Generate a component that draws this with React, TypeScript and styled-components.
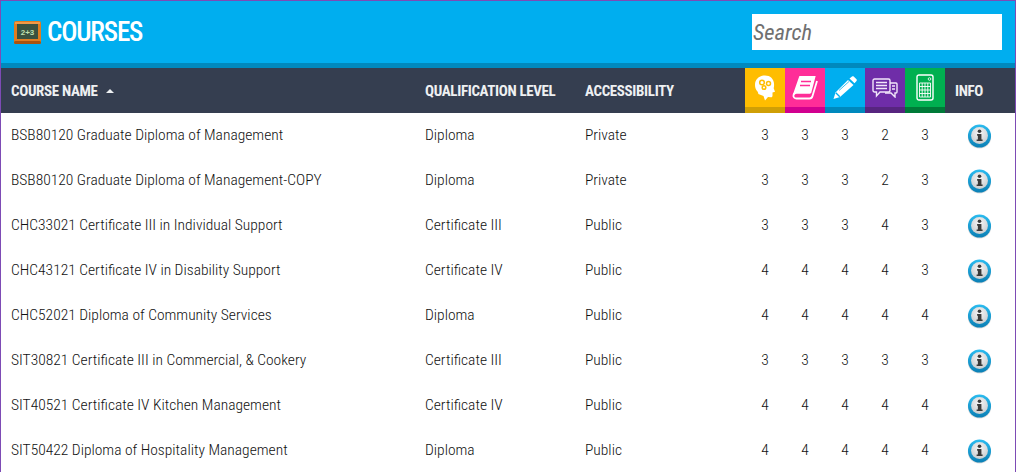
import React from "react";
import styled, { createGlobalStyle } from "styled-components";

const courses = [
	{ name: "BSB80120 Graduate Diploma of Management", level: "Diploma", access: "Private", scores: [3, 3, 3, 2, 3] },
	{ name: "BSB80120 Graduate Diploma of Management-COPY", level: "Diploma", access: "Private", scores: [3, 3, 3, 2, 3] },
	{ name: "CHC33021 Certificate III in Individual Support", level: "Certificate III", access: "Public", scores: [3, 3, 3, 4, 3] },
	{ name: "CHC43121 Certificate IV in Disability Support", level: "Certificate IV", access: "Public", scores: [4, 4, 4, 4, 3] },
	{ name: "CHC52021 Diploma of Community Services", level: "Diploma", access: "Public", scores: [4, 4, 4, 4, 4] },
	{ name: "SIT30821 Certificate III in Commercial, & Cookery", level: "Certificate III", access: "Public", scores: [3, 3, 3, 3, 3] },
	{ name: "SIT40521 Certificate IV Kitchen Management", level: "Certificate IV", access: "Public", scores: [4, 4, 4, 4, 4] },
	{ name: "SIT50422 Diploma of Hospitality Management", level: "Diploma", access: "Public", scores: [4, 4, 4, 4, 4] },
];

const GlobalStyle = createGlobalStyle`
  html, body {
    margin: 0;
    height: 472px;
    overflow: hidden;
    background: #fff;
  }
`;

const Frame = styled.div`
  width: 1016px;
  height: 472px;
  box-sizing: border-box;
  border: 1px solid #7d4bb5;
  border-bottom: 0;
  overflow: hidden;
  font-family: "Roboto", sans-serif;
  font-stretch: 75%;
`;

const TopBar = styled.header`
  height: 62px;
  background: #00aeef;
  border-bottom: 5px solid #0089bd;
  display: flex;
  align-items: center;
  justify-content: space-between;
  padding: 0 13px;
`;

const Brand = styled.div`
  display: flex;
  align-items: center;
  gap: 5px;
`;

const Title = styled.h1`
  margin: 0;
  color: #fff;
  font-size: 27px;
  font-weight: 500;
  letter-spacing: -1.2px;
`;

const SearchBox = styled.input`
  width: 250px;
  height: 36px;
  box-sizing: border-box;
  border: 0;
  padding: 0 1px;
  background: #fff;
  font-family: inherit;
  font-stretch: inherit;
  font-size: 22.5px;
  font-style: italic;
  &::placeholder {
    color: #707070;
    opacity: 1;
  }
`;

const columns = "414px 160px 170px repeat(5, 40px) 70px";

const HeadRow = styled.div`
  display: grid;
  grid-template-columns: ${columns};
  height: 45px;
  background: #353e50;
  color: #eef0f2;
  font-size: 15px;
  font-weight: 700;
  letter-spacing: -0.35px;
  white-space: nowrap;
`;

const HeadCell = styled.div`
  display: flex;
  align-items: center;
  padding-left: 10px;
  gap: 8px;
`;

const IconCell = styled.div<{ $bg: string; $edge: string }>`
  display: flex;
  align-items: center;
  justify-content: center;
  box-sizing: border-box;
  background: ${(p) => p.$bg};
  border-bottom: 6px solid ${(p) => p.$edge};
`;

const SortArrow = styled.span`
  width: 0;
  height: 0;
  border-left: 4px solid transparent;
  border-right: 4px solid transparent;
  border-bottom: 4px solid #eef0f2;
`;

const Row = styled.div`
  display: grid;
  grid-template-columns: ${columns};
  height: 45px;
  align-items: center;
  background: #fff;
  color: #111;
  font-size: 15.5px;
  font-weight: 320;
`;

const Cell = styled.div`
  padding-left: 10px;
  padding-bottom: 1px;
`;

const Score = styled.div`
  text-align: center;
  padding-bottom: 1px;
`;

const InfoCell = styled.div`
  display: flex;
  justify-content: center;
  padding-right: 2px;
  padding-top: 2px;
`;

const Board = () => (
	<svg width="28" height="25" viewBox="0 0 28 25">
		<rect x="0" y="1" width="27" height="23" rx="2" fill="#e07c20" />
		<rect x="0" y="21" width="27" height="3" rx="1.500" fill="#a8530f" />
		<rect x="1" y="2" width="25" height="2" fill="#f09a48" />
		<rect x="3" y="4" width="21" height="15" fill="#3a5240" />
		<text x="13.500" y="14.500" textAnchor="middle" fontSize="8" fontWeight="700" fill="#bfe0b0" fontFamily="Liberation Sans">
			2+3
		</text>
	</svg>
);

const HeadIcon = () => (
	<svg width="22" height="26" viewBox="0 0 22 26">
		<path
			d="M11 .5C5 .5 1 4.500 1 10c0 3 1 5 2.500 6.500.6 1 .8 1.500.8 2.500L9.500 21l1.500 4.500 3-3.500 3 .3c1 0 1.500-.8 1.500-1.800v-3l2.500-.8-1.300-3.500C21.500 5 17 .5 11 .5z"
			fill="#fff"
		/>
		<g fill="none" stroke="#ffbd00" strokeWidth="1.500">
			<circle cx="8" cy="7.500" r="2.300" />
			<circle cx="14.500" cy="8.500" r="2" />
			<circle cx="10" cy="12.500" r="1.800" />
		</g>
	</svg>
);

const BookIcon = () => (
	<svg width="26" height="24" viewBox="0 0 26 24" fill="none" stroke="#fff" strokeWidth="1.800">
		<path d="M8 1h14.500l-4 15H4.500C3 16 2 17 2 18z" fill="#fff" />
		<path d="M25 5l-4.500 15c-.4 1.500-1.300 2.500-3 2.500H4.500C2.500 22.500 1 21 1.500 19c.4-1.500 1.800-2.200 3-2.200h14" />
		<path d="M9 5.500h10M8 9.500h10" stroke="#ff2d98" strokeWidth="1.700" />
	</svg>
);

const PencilIcon = () => (
	<svg width="24" height="23" viewBox="0 0 24 23">
		<path d="M16.500 2.500L19 .5c.6-.4 1.200-.4 1.700 0l2.800 2.800c.5.5.4 1.200 0 1.700l-2 2.300z" fill="#fff" />
		<path d="M15 4l5.500 5L7 21 .5 23l2-6.500z" fill="#fff" />
		<path d="M2.800 16.800l4 4" stroke="#00aeef" strokeWidth="1.300" />
		<path d="M6 14.500L16 5.500" stroke="#00aeef" strokeWidth=".8" />
	</svg>
);

const ChatIcon = () => (
	<svg width="26" height="20" viewBox="0 0 26 20" fill="none" stroke="#f2e6fa" strokeWidth="1.400">
		<path d="M2.500 1h14c.8 0 1.500.7 1.500 1.500v10c0 .8-.7 1.500-1.500 1.500H8l-3.500 4v-4h-2c-.8 0-1.500-.7-1.500-1.500v-10C1 1.700 1.700 1 2.500 1z" />
		<path d="M4 4.500h11M4 7.500h11M4 10.500h11" />
		<path d="M18 5h6c.6 0 1 .4 1 1v8c0 .6-.4 1-1 1h-1v4l-4-4h-6" />
		<path d="M20 8h3M20 11h3" />
	</svg>
);

const CalcIcon = () => (
	<svg width="18" height="27" viewBox="0 0 18 27" fill="none" stroke="#fff">
		<rect x="1" y="1" width="16" height="25" rx="2" strokeWidth="1.400" />
		<path d="M3.500 9h11v14h-11zM3.500 12.500h11M3.500 16h11M3.500 19.500h11M6.200 9v14M9 9v14M11.800 9v14" strokeWidth=".9" />
		<circle cx="13.500" cy="5" r="1.300" strokeWidth=".8" />
	</svg>
);

const InfoIcon = ({ id }: { id: number }) => (
	<svg width="25" height="25" viewBox="0 0 26 26">
		<defs>
			<linearGradient id={`ring${id}`} x1="0" y1="0" x2="0" y2="1">
				<stop offset="0" stopColor="#2bbcf0" />
				<stop offset="1" stopColor="#0a7fb5" />
			</linearGradient>
			<radialGradient id={`face${id}`} cx="0.5" cy="0.35" r="0.7">
				<stop offset="0" stopColor="#f6f6f6" />
				<stop offset="1" stopColor="#c6cacd" />
			</radialGradient>
		</defs>
		<ellipse cx="13" cy="14" rx="12" ry="11.500" fill="#9a9a9a" opacity=".35" />
		<circle cx="13" cy="12.500" r="12" fill={`url(#ring${id})`} />
		<circle cx="13" cy="12" r="8.800" fill={`url(#face${id})`} />
		<circle cx="13" cy="7.500" r="1.900" fill="#3a3a3a" />
		<path d="M10.500 10.500H15v5.500h1.200v1.700H10v-1.700h1.300v-3.900h-.8z" fill="#3a3a3a" />
	</svg>
);

const skills = [
	{ bg: "#ffbd00", edge: "#cf9f06", icon: <HeadIcon /> },
	{ bg: "#ff2d98", edge: "#d1008f", icon: <BookIcon /> },
	{ bg: "#00aeef", edge: "#0089bd", icon: <PencilIcon /> },
	{ bg: "#6f2da8", edge: "#57257f", icon: <ChatIcon /> },
	{ bg: "#00b050", edge: "#007a38", icon: <CalcIcon /> },
];

export default function App() {
	return (
		<Frame>
			<GlobalStyle />
			<TopBar>
				<Brand>
					<Board />
					<Title>COURSES</Title>
				</Brand>
				<SearchBox placeholder="Search" />
			</TopBar>
			<HeadRow>
				<HeadCell>
					COURSE NAME <SortArrow />
				</HeadCell>
				<HeadCell>QUALIFICATION LEVEL</HeadCell>
				<HeadCell>ACCESSIBILITY</HeadCell>
				{skills.map((s) => (
					<IconCell key={s.bg} $bg={s.bg} $edge={s.edge}>
						{s.icon}
					</IconCell>
				))}
				<HeadCell>INFO</HeadCell>
			</HeadRow>
			{courses.map((c, i) => (
				<Row key={c.name}>
					<Cell>{c.name}</Cell>
					<Cell>{c.level}</Cell>
					<Cell>{c.access}</Cell>
					{c.scores.map((n, j) => (
						<Score key={j}>{n}</Score>
					))}
					<InfoCell>
						<InfoIcon id={i} />
					</InfoCell>
				</Row>
			))}
		</Frame>
	);
}
